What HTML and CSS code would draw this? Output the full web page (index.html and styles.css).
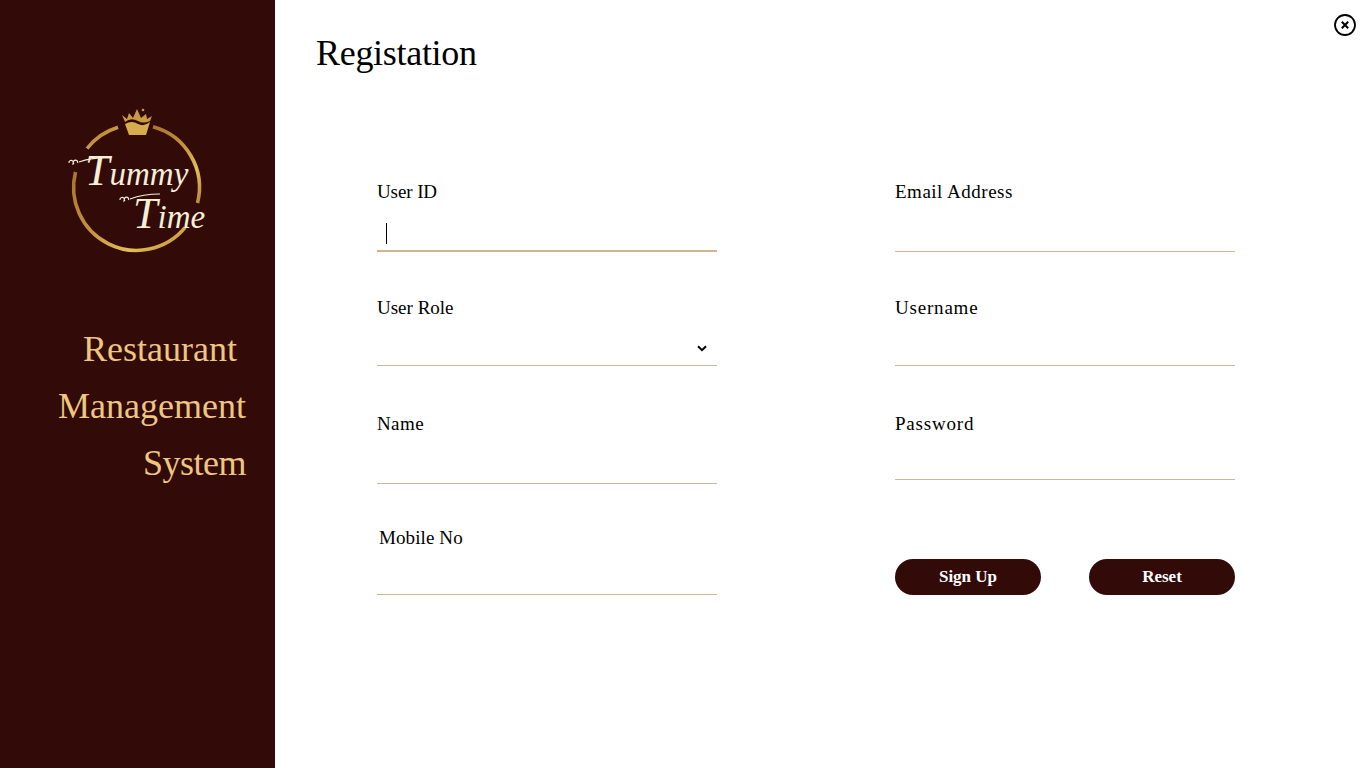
FILE: index.html
```html
<!DOCTYPE html>
<html lang="en">
<head>
    <meta charset="UTF-8">
    <meta name="viewport" content="width=device-width, initial-scale=1.0">
    <title>Registation</title>
    <link rel="stylesheet" href="styles.css">
</head>
<body>
    <aside class="sidebar">
        <svg class="logo" width="140" height="150" viewBox="0 0 140 150">
            <defs>
                <linearGradient id="gold" x1="0" y1="0" x2="1" y2="1">
                    <stop offset="0" stop-color="#a9742c"/>
                    <stop offset="0.45" stop-color="#c2923c"/>
                    <stop offset="0.75" stop-color="#e3bd56"/>
                    <stop offset="1" stop-color="#b98a34"/>
                </linearGradient>
            </defs>
            <!-- ring, broken where the text and the crown sit -->
            <path d="M8.5 65 A63 63 0 0 0 118 120.7" fill="none" stroke="url(#gold)" stroke-width="3.6"/>
            <path d="M130.5 96 A63 63 0 0 0 86 19.7" fill="none" stroke="url(#gold)" stroke-width="3.6"/>
            <path d="M51 20.3 A63 63 0 0 0 20 41.5" fill="none" stroke="url(#gold)" stroke-width="3.6"/>
            <!-- crown -->
            <path d="M58 17 Q65 13 71 17 Q77 20 83 15 L79 28 L62 28 Z" fill="#d6ad4e"/>
            <path d="M55 8 L60 12 L62 6 L66 11 L70 2 L74 11 L79 7 L80 12 L85 9 L83 14 Q76 17 71 14 Q64 10 58 15 Z" fill="#c89b42"/>
            <circle cx="76" cy="3" r="1.3" fill="#c89b42"/>
            <!-- flourishes beside the script capitals -->
            <path d="M12 55 Q26 50 43 51 M2 56 a2.2 2.2 0 1 1 3.4 1.4 M7 57 a2.2 2.2 0 1 1 3.6 -1" fill="none" stroke="#f7efd6" stroke-width="1.2"/>
            <path d="M63 92 Q76 87 93 87 M53 93 a2.2 2.2 0 1 1 3.4 1.4 M58 94 a2.2 2.2 0 1 1 3.6 -1" fill="none" stroke="#f7efd6" stroke-width="1.2"/>
            <text class="logo-text" x="18" y="78"><tspan class="logo-cap">T</tspan>ummy</text>
            <text class="logo-text" x="66" y="121"><tspan class="logo-cap">T</tspan>ime</text>
        </svg>
        <div class="tagline">
            <p class="tagline-first">Restaurant</p>
            <p>Management</p>
            <p class="tagline-last">System</p>
        </div>
    </aside>

    <main class="main">
        <button class="close" type="button" aria-label="Close">
            <svg width="24" height="24" viewBox="0 0 24 24">
                <circle cx="12" cy="12" r="10" fill="none" stroke="#000" stroke-width="1.8"/>
                <path d="M8.8 8.8 L15.2 15.2 M15.2 8.8 L8.8 15.2" stroke="#000" stroke-width="2"/>
            </svg>
        </button>

        <h1>Registation</h1>

        <form class="form">
            <div class="column">
                <div class="field field-userid">
                    <label for="user-id">User ID</label>
                    <input id="user-id" type="text">
                    <span class="caret"></span>
                </div>
                <div class="field field-role">
                    <label for="user-role">User Role</label>
                    <select id="user-role"><option></option></select>
                    <svg class="chevron" width="10" height="7" viewBox="0 0 10 7">
                        <path d="M1 1.2 L5 5.2 L9 1.2" fill="none" stroke="#000" stroke-width="2"/>
                    </svg>
                </div>
                <div class="field field-name">
                    <label for="name">Name</label>
                    <input id="name" type="text">
                </div>
                <div class="field field-mobile">
                    <label for="mobile">Mobile No</label>
                    <input id="mobile" type="text">
                </div>
            </div>

            <div class="column">
                <div class="field field-email">
                    <label for="email">Email Address</label>
                    <input id="email" type="text">
                </div>
                <div class="field field-username">
                    <label for="username">Username</label>
                    <input id="username" type="text">
                </div>
                <div class="field field-password">
                    <label for="password">Password</label>
                    <input id="password" type="password">
                </div>
                <div class="buttons">
                    <button type="submit" class="btn">Sign Up</button>
                    <button type="reset" class="btn">Reset</button>
                </div>
            </div>
        </form>
    </main>
</body>
</html>
```

FILE: styles.css
```css
body {
    margin: 0;
    height: 768px;
    display: flex;
    overflow: hidden;
    background-color: #fff;
    color: #000;
    font-family: 'Liberation Serif', serif;
}

.sidebar {
    width: 275px;
    flex-shrink: 0;
    background-color: #320a07;
    box-sizing: border-box;
    padding-top: 107px;
}

.logo {
    display: block;
    margin-left: 67px;
}

.logo-text {
    font-family: 'Liberation Serif', serif;
    font-style: italic;
    font-size: 33px;
    fill: #f7efd6;
}

.logo-cap {
    font-size: 44px;
}

.tagline {
    margin-top: 64px;
    padding-right: 29px;
    text-align: right;
    color: #edc67f;
    font-size: 36px;
}

.tagline p {
    margin: 0;
    height: 57px;
    line-height: 57px;
}

.tagline-first {
    padding-right: 9px;
}

.tagline .tagline-last {
    letter-spacing: -0.5px;
}

.main {
    flex: 1;
    position: relative;
}

.close {
    position: absolute;
    top: 13px;
    right: 9px;
    padding: 0;
    border: none;
    background: none;
}

.close svg {
    display: block;
}

h1 {
    margin: 32px 0 0 41px;
    font-size: 36px;
    line-height: 42px;
    font-weight: 400;
    letter-spacing: -0.3px;
}

.form {
    display: flex;
    gap: 178px;
    margin: 108px 0 0 102px;
}

.column {
    width: 340px;
    display: flex;
    flex-direction: column;
}

.field {
    position: relative;
    display: flex;
    flex-direction: column;
}

.field label {
    height: 20px;
    line-height: 20px;
    font-size: 19px;
}

.field input, .field select {
    width: 100%;
    box-sizing: border-box;
    border: none;
    border-bottom: 1px solid #c9b8a0;
    border-radius: 0;
    background: transparent;
    outline: none;
    padding: 0;
    margin: 0;
    appearance: none;
}

.field-userid label { letter-spacing: -0.1px; }
.field-userid input { height: 50px; border-bottom: 2px solid #d0b48c; }
.field-role { margin-top: 46px; }
.field-role select { height: 48px; }
.field-name { margin-top: 48px; }
.field-name label { letter-spacing: 0.4px; }
.field-name input { height: 50px; }
.field-mobile { margin-top: 44px; }
.field-mobile label { padding-left: 2px; letter-spacing: 0.1px; }
.field-mobile input { height: 47px; border-bottom-color: #d4b483; }

.field-email label { letter-spacing: 0.5px; }
.field-username label, .field-password label { letter-spacing: 0.8px; }
.field-email input { height: 50px; border-bottom-color: #d2b896; }
.field-username { margin-top: 46px; }
.field-username input { height: 48px; }
.field-password { margin-top: 48px; }
.field-password input { height: 46px; }

.caret {
    position: absolute;
    left: 9px;
    top: 41px;
    width: 1px;
    height: 21px;
    background-color: #000;
}

.chevron {
    position: absolute;
    left: 320px;
    top: 47px;
}

.buttons {
    display: flex;
    justify-content: space-between;
    margin-top: 79px;
}

.btn {
    width: 146px;
    height: 36px;
    padding: 0 0 1px;
    border: none;
    border-radius: 18px;
    background-color: #320a07;
    color: #fff;
    font-family: 'Liberation Serif', serif;
    font-size: 17px;
    font-weight: 700;
}
```
